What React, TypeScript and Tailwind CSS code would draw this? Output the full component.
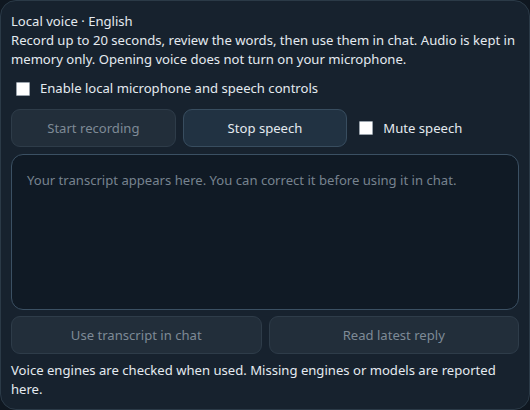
import React, { useState } from 'react';

const font = { fontFamily: '"Noto Sans", "Open Sans", sans-serif' };

const Box = ({ checked, onChange }: { checked: boolean; onChange: (v: boolean) => void }) => (
  <input
    type="checkbox"
    checked={checked}
    onChange={(e) => onChange(e.target.checked)}
    className="h-[14px] w-[14px] shrink-0 appearance-none rounded-[1px] border border-[#9aa3ac] bg-white checked:bg-[#3b82f6]"
  />
);

export default function App() {
  const [enabled, setEnabled] = useState(false);
  const [muted, setMuted] = useState(false);
  const [text, setText] = useState('');

  const btnOff =
    'h-[38px] rounded-[9px] border border-[#2e3c49] bg-[#222e3a] text-[#7e8a96]';
  const btnOn =
    'h-[38px] rounded-[9px] border border-[#384d5f] bg-[#213242] text-[#e4eaf0]';

  return (
    <div className="h-[410px] w-[530px] bg-[#0f1720]" style={font}>
      <div className="flex h-full flex-col rounded-[16px] border border-[#2b3a47] bg-[#17222e] px-[10px] pt-[11px] text-[13.1px] leading-[19px] text-[#e4eaf0]">
        <div>Local voice · English</div>
        <p>
          Record up to 20 seconds, review the words, then use them in chat. Audio is kept in memory
          only. Opening voice does not turn on your microphone.
        </p>

        <label className="mt-[10px] flex h-[19px] items-center gap-[10px] pl-[5px]">
          <Box checked={enabled} onChange={setEnabled} />
          <span>Enable local microphone and speech controls</span>
        </label>

        <div className="mt-[11px] grid grid-cols-3 gap-[7px]">
          <button disabled className={btnOff}>
            Start recording
          </button>
          <button className={btnOn}>Stop speech</button>
          <label className="flex items-center gap-[10px] pl-[5px]">
            <Box checked={muted} onChange={setMuted} />
            <span>Mute speech</span>
          </label>
        </div>

        <textarea
          value={text}
          onChange={(e) => setText(e.target.value)}
          placeholder="Your transcript appears here. You can correct it before using it in chat."
          className="mt-[7px] h-[156px] resize-none rounded-[12px] border border-[#3b5063] bg-[#101a25] px-[15px] pt-[16px] text-[13.1px] leading-[19px] text-[#e4eaf0] outline-none placeholder:text-[#77838f]"
        />

        <div className="mt-[6px] grid grid-cols-2 gap-[7px]">
          <button disabled className={btnOff}>
            Use transcript in chat
          </button>
          <button disabled className={btnOff}>
            Read latest reply
          </button>
        </div>

        <p className="mt-[7px]">
          Voice engines are checked when used. Missing engines or models are reported here.
        </p>
      </div>
    </div>
  );
}
